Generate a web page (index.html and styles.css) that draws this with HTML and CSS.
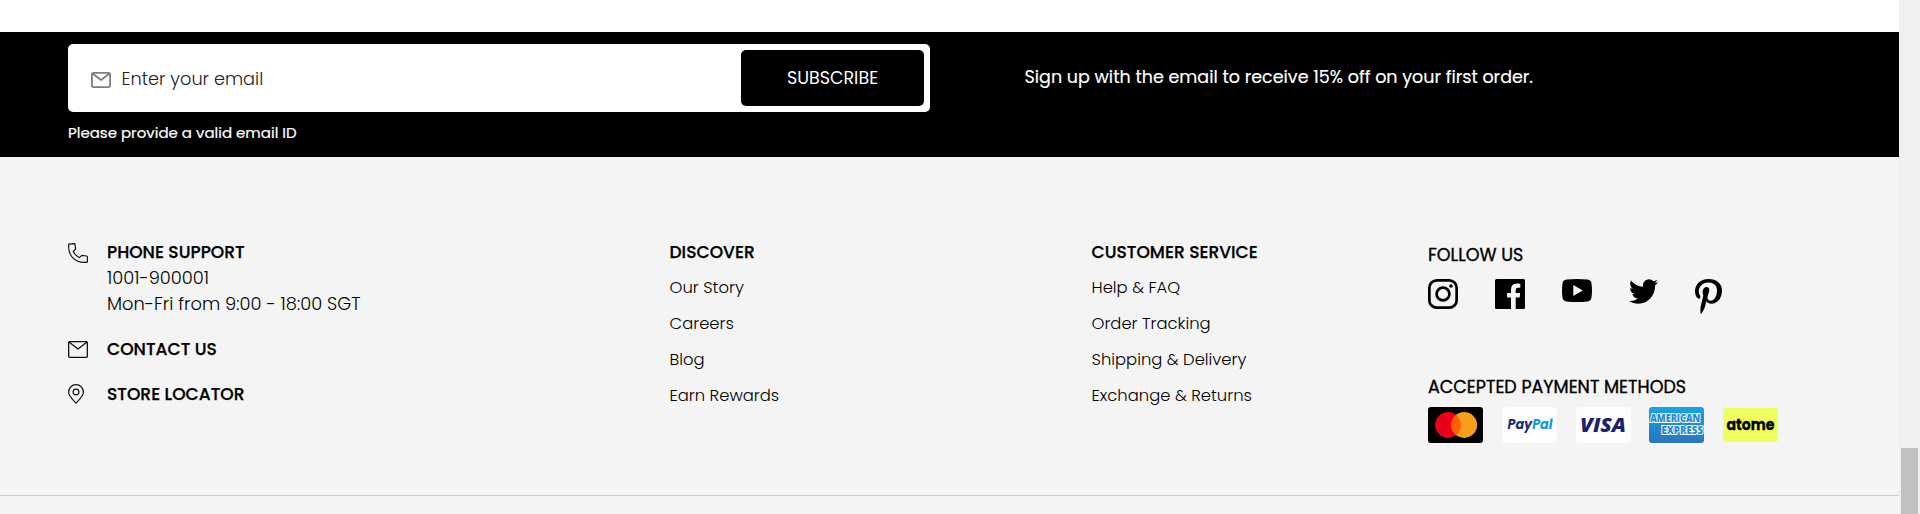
FILE: index.html
```html
<!DOCTYPE html>
<html lang="en">
<head>
<meta charset="utf-8">
<title>Footer</title>
<link rel="stylesheet" href="styles.css">
</head>
<body>
<div class="window">
<main class="page">
  <section class="newsletter">
    <div class="signup">
      <form class="signup-form">
        <svg class="signup-icon" width="20" height="16" viewBox="0 0 20 16" fill="none" stroke="#7d7d7d" stroke-width="1.8" stroke-linejoin="round"><rect x=".9" y=".9" width="18.200" height="14.200" rx="1.500"/><path d="M1.500 1.500 10 8l8.500-6.500"/></svg>
        <span class="signup-field">Enter your email</span>
        <button class="signup-button" type="button">SUBSCRIBE</button>
      </form>
      <p class="signup-error">Please provide a valid email ID</p>
    </div>
    <p class="offer">Sign up with the email to receive 15% off on your first order.</p>
  </section>

  <footer class="footer">
    <section class="support">
      <div class="support-row">
        <svg class="phone-icon" width="20" height="20" viewBox="0 0 20 20" fill="none" stroke="#111" stroke-width="1.2" stroke-linejoin="round"><path d="M.7 1.100 6.200.7Q6.900.7 7 1.400L7.600 6 5.300 8.400Q6.800 12 11.500 14.700L13.800 12.400 18.700 13Q19.400 13.100 19.400 13.800L19.300 18.700Q19.300 19.300 18.600 19.300 9.600 20 4.600 14.600 0 9.600.7 1.100Z"/></svg>
        <div class="support-text">
          <h2 class="title">PHONE SUPPORT</h2>
          <p class="detail">1001-900001</p>
          <p class="detail">Mon-Fri from 9:00 - 18:00 SGT</p>
        </div>
      </div>
      <div class="support-row">
        <svg class="mail-icon" width="20" height="17" viewBox="0 0 20 17" fill="none" stroke="#111" stroke-width="1.3" stroke-linejoin="round"><rect x=".65" y=".65" width="18.700" height="15.700" rx="1"/><path d="M1 1 10 8l9-7"/></svg>
        <h2 class="title">CONTACT US</h2>
      </div>
      <div class="support-row">
        <svg class="pin-icon" width="16" height="20" viewBox="0 0 16 20" fill="none" stroke="#111" stroke-width="1.150"><path d="M8 19.300C6.500 17 .6 12.600.6 8A7.400 7.400 0 0 1 15.400 8C15.400 12.600 9.500 17 8 19.300Z" stroke-linejoin="round"/><circle cx="8" cy="8" r="2.900"/></svg>
        <h2 class="title">STORE LOCATOR</h2>
      </div>
    </section>

    <nav class="links">
      <h2 class="title">DISCOVER</h2>
      <a class="link">Our Story</a>
      <a class="link">Careers</a>
      <a class="link">Blog</a>
      <a class="link">Earn Rewards</a>
    </nav>

    <nav class="links">
      <h2 class="title">CUSTOMER SERVICE</h2>
      <a class="link">Help &amp; FAQ</a>
      <a class="link">Order Tracking</a>
      <a class="link">Shipping &amp; Delivery</a>
      <a class="link">Exchange &amp; Returns</a>
    </nav>

    <section class="social">
      <h2 class="subtitle">FOLLOW US</h2>
      <div class="social-icons">
        <svg width="30" height="30" viewBox="0 0 30 30" fill="none" stroke="#000" stroke-width="2.700"><rect x="1.350" y="1.350" width="27.300" height="27.300" rx="7.500"/><circle cx="15" cy="15" r="6.400"/><circle cx="23" cy="7" r="1.800" fill="#000" stroke="none"/></svg>
        <svg width="30" height="30" viewBox="0 0 30 30"><path fill-rule="evenodd" d="M1.500 0H28.500Q30 0 30 1.500V28.500Q30 30 28.500 30H20.700V18.400H24.600L25.200 13.900H20.700V11Q20.700 8.800 22.900 8.800H25.300V4.800Q23.600 4.500 21.800 4.500 16 4.500 16 10.500V13.900H12.100V18.400H16V30H1.500Q0 30 0 28.500V1.500Q0 0 1.500 0Z"/></svg>
        <svg width="30" height="23" viewBox="0 0 30 23"><path fill-rule="evenodd" d="M4.500.6Q15-.5 25.500.6 29 1 29.500 4.500 30.500 11.500 29.500 18.500 29 22 25.500 22.400 15 23.500 4.500 22.400 1 22 .5 18.500-.5 11.500.5 4.500 1 1 4.500.6ZM11.300 6V17L20.800 11.500Z"/></svg>
        <svg width="29" height="25" viewBox="0 0 24 20" preserveAspectRatio="none"><path d="M23.950 2.570a10 10 0 0 1-2.820.77 4.960 4.960 0 0 0 2.160-2.720c-.95.550-2 .95-3.130 1.180a4.920 4.920 0 0 0-8.380 4.480C7.690 6.090 4.070 4.130 1.640 1.160a4.820 4.820 0 0 0-.67 2.480c0 1.710.87 3.210 2.190 4.100a4.900 4.900 0 0 1-2.230-.620v.060a4.920 4.920 0 0 0 3.950 4.830 5 5 0 0 1-2.210.08 4.940 4.940 0 0 0 4.600 3.420A9.870 9.870 0 0 1 0 17.540a13.990 13.990 0 0 0 7.550 2.210c9.050 0 14-7.500 14-13.980 0-.210 0-.420-.020-.630a9.940 9.940 0 0 0 2.460-2.550Z"/></svg>
        <svg width="27" height="35" viewBox="0 0 27 35"><path d="M13.800 0C4.700 0 0 6.200 0 12.200c0 3.300 1.300 6.500 3.900 7.600.5.200.9 0 1-.5l.5-1.800c.1-.5 0-.7-.3-1.100-.9-1-1.300-2.300-1.300-4.100C3.800 7.600 7.500 3.500 13.300 3.500c5.100 0 8.700 2.800 8.700 7.700 0 5.800-2.700 10.500-6.400 10.500-2.100 0-3.600-1.700-3.100-3.700.6-2.500 1.800-5.200 1.800-7 0-1.600-.9-3-2.700-3-2.200 0-3.900 2.200-3.900 5.200 0 1.900.6 3.200.6 3.200L5.700 27.500C5.100 30 5.600 34.200 5.700 34.600c.1.300.4.300.6.100.2-.3 2.800-3.700 3.600-6.900l1.400-5.500c.7 1.400 2.900 2.500 5.100 2.500 6.700 0 10.600-6.200 10.600-13.700C27 4.800 21.300 0 13.800 0Z"/></svg>
      </div>
      <h2 class="subtitle">ACCEPTED PAYMENT METHODS</h2>
      <div class="cards">
        <svg width="55" height="36" viewBox="0 0 55 36"><rect width="55" height="36" rx="3"/><circle cx="20" cy="18" r="12.900" fill="#eb001b"/><circle cx="36.200" cy="18" r="12.900" fill="#f79e1b"/><path d="M28.100 7.960a12.900 12.900 0 0 1 0 20.080 12.900 12.900 0 0 1 0-20.080Z" fill="#ff5f00"/></svg>
        <svg width="55" height="36" viewBox="0 0 55 36"><rect width="55" height="36" rx="3" fill="#fdfdfd"/><text class="paypal" x="5.500" y="22.300" textLength="45" lengthAdjust="spacingAndGlyphs"><tspan fill="#1a2f78">Pay</tspan><tspan fill="#1597dc">Pal</tspan></text></svg>
        <svg width="55" height="36" viewBox="0 0 55 36"><rect width="55" height="36" rx="3" fill="#fdfdfd"/><text class="visa" x="4" y="25" fill="#1a1f71" textLength="46" lengthAdjust="spacingAndGlyphs">VISA</text></svg>
        <svg width="55" height="36" viewBox="0 0 55 36"><defs><linearGradient id="amex" x1="0" y1="0" x2="0" y2="1"><stop offset="0" stop-color="#16a5e0"/><stop offset="1" stop-color="#2b74bd"/></linearGradient></defs><rect width="55" height="36" rx="3" fill="url(#amex)"/><text class="amex" x="1.200" y="15.400" textLength="50" lengthAdjust="spacingAndGlyphs">AMERICAN</text><text class="amex" x="12.500" y="27" textLength="41.500" lengthAdjust="spacingAndGlyphs">EXPRESS</text></svg>
        <svg width="55" height="36" viewBox="0 0 55 36"><rect y="1" width="55" height="34" rx="3" fill="#f0ff5f"/><text class="atome" x="3.500" y="22.500" textLength="48" lengthAdjust="spacingAndGlyphs">atome</text></svg>
      </div>
    </section>
  </footer>
</main>
<aside class="scrollbar"><div class="scroll-thumb"></div></aside>
</div>
</body>
</html>
```
FILE: styles.css
```css
* { box-sizing: border-box; }
body { margin: 0; font-family: Poppins, Inter, "Open Sans", sans-serif; color: #000; background: #fff; }
h2, p { margin: 0; }
svg { display: block; flex: none; }

.window { display: flex; height: 514px; overflow: hidden; }
.page { width: 1899px; padding-top: 32px; background: linear-gradient(#fff 32px, #f4f4f4 32px); display: flex; flex-direction: column; }
.scrollbar { width: 21px; background: #f0f0f0; padding: 448px 2px 0; }
.scroll-thumb { height: 66px; background: #c1c1c1; }

.newsletter { height: 125px; background: #000; color: #fff; padding: 12px 0 0 68px; display: flex; gap: 94.5px; }
.signup { width: 862px; }
.signup-form { height: 68px; padding: 6px 6px 6px 23px; background: #fff; border-radius: 5px; display: flex; align-items: center; }
.signup-icon { margin-top: 4px; }
.signup-field { flex: 1; margin-left: 10.5px; padding-top: 1px; font-size: 17.75px; font-weight: 300; color: #222; }
.signup-button { width: 183px; height: 56px; border: 0; border-radius: 5px; background: #000; color: #fff; font: 400 17.5px/54px Poppins, Inter, sans-serif; padding: 0; }
.signup-error { font-size: 15px; line-height: 20px; padding-top: 11px; -webkit-text-stroke: .2px #fff; }
.offer { font-size: 17.5px; line-height: 26px; padding-top: 20px; white-space: nowrap; -webkit-text-stroke: .15px #fff; }

.footer { height: 339px; background: #f4f4f4; border-bottom: 1px solid #ccc; padding: 82px 0 0 68px; display: grid; grid-template-columns: 601.5px 422px 336.5px 1fr; align-items: start; }

.title { font-size: 17.1px; font-weight: 500; line-height: 26px; white-space: nowrap; -webkit-text-stroke: .25px #000; }
.subtitle { font-size: 17.5px; font-weight: 400; line-height: 26px; white-space: nowrap; -webkit-text-stroke: .35px #000; }

.support { display: flex; flex-direction: column; gap: 19px; }
.support-row { display: grid; grid-template-columns: 39px 1fr; align-items: start; }
.phone-icon { margin-top: 4px; }
.mail-icon { margin-top: 5px; }
.pin-icon { margin-top: 3px; }
.detail { font-size: 17.85px; font-weight: 300; line-height: 26px; }

.links { display: flex; flex-direction: column; }
.links .title { margin-bottom: 5px; }
.link { font-size: 16.4px; font-weight: 300; line-height: 36px; }

.social { padding-top: 3px; }
.social-icons { display: flex; gap: 37px; align-items: flex-start; height: 35px; margin: 11px 0 60px; }
.cards { display: flex; gap: 18.75px; margin-top: 7px; }

.paypal { font: italic 700 13.5px Poppins, Inter, sans-serif; }
.visa { font: italic 800 19px "Open Sans", sans-serif; }
.amex { font: 800 9.600px "Open Sans", sans-serif; fill: #2189cf; stroke: #fff; stroke-width: 1.800px; paint-order: stroke; }
.atome { font: 700 15.5px Poppins, Inter, sans-serif; fill: #000; stroke: #000; stroke-width: .3px; }
```
